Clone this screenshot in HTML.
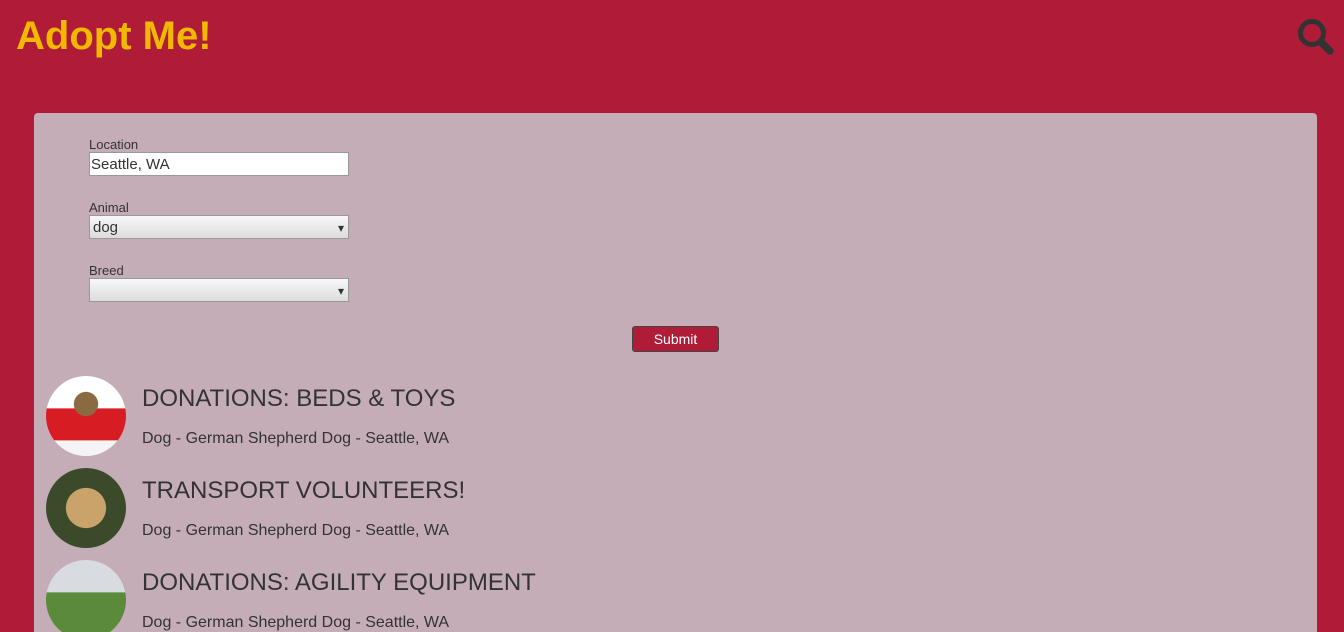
<!DOCTYPE html>
<html><head><meta charset="utf-8"><style>
*{box-sizing:border-box}
html,body{margin:0;width:1344px;height:632px;overflow:hidden}
body{background:#b01c37;font-family:"Liberation Sans",sans-serif;position:relative}
h1{position:absolute;left:16px;top:13px;margin:0;font-size:40px;font-weight:bold;color:#f0b800;line-height:46px}
.panel{position:absolute;left:34px;top:113px;width:1283px;height:519px;background:#c4adb7;border-radius:4px 4px 0 0}
label{position:absolute;left:55px;font-size:13px;color:#333}
.inp{position:absolute;left:55px;width:260px;height:24px;border:1px solid #999;font-size:15px;color:#333;padding:4px 1px 0;line-height:16px}
.txt{background:#fff}
.sel{background:linear-gradient(#f8f8f8,#dcdcdc);padding-left:3px}
.sel:after{content:"▾";position:absolute;right:4px;top:4px;font-size:12px}
.btn{position:absolute;left:598px;top:213px;width:87px;height:26px;background:#b01c37;border:1px solid #444;border-radius:3px;color:#fff;font-size:14px;text-align:center;line-height:24px}
.pet{position:absolute;left:12px}
.pet .img{position:absolute;left:0;top:0;width:80px;height:80px;border-radius:50%}
.pet h2{position:absolute;left:96px;top:9px;margin:0;font-size:24px;font-weight:normal;color:#333;white-space:nowrap}
.pet p{position:absolute;left:96px;top:54px;margin:0;font-size:16px;color:#333;white-space:nowrap}
</style></head><body>
<h1>Adopt Me!</h1>
<svg style="position:absolute;left:1296px;top:18px" width="42" height="42" viewBox="0 0 42 42"><circle cx="16" cy="15" r="11.5" fill="none" stroke="#333" stroke-width="5"/><line x1="25" y1="24" x2="34" y2="33" stroke="#333" stroke-width="7.5" stroke-linecap="round"/></svg>
<div class="panel">
<label style="top:24px">Location</label><div class="inp txt" style="top:39px">Seattle, WA</div>
<label style="top:87px">Animal</label><div class="inp sel" style="top:102px">dog</div>
<label style="top:150px">Breed</label><div class="inp sel" style="top:165px"></div>
<div class="btn">Submit</div>
<div class="pet" style="top:263px"><div class="img" style="background:radial-gradient(circle at 50% 35%,#8a6a40 0 18%,transparent 19%),linear-gradient(#fff 0 40%,#d81c24 41% 80%,#f4f4f4 81%)"></div><h2>DONATIONS: BEDS &amp; TOYS</h2><p>Dog - German Shepherd Dog - Seattle, WA</p></div>
<div class="pet" style="top:355px"><div class="img" style="background:radial-gradient(circle at 50% 50%,#c9a36a 0 35%,#3a4a2a 36%)"></div><h2>TRANSPORT VOLUNTEERS!</h2><p>Dog - German Shepherd Dog - Seattle, WA</p></div>
<div class="pet" style="top:447px"><div class="img" style="background:linear-gradient(#d8dce0 0 40%,#5a8a3a 41%)"></div><h2>DONATIONS: AGILITY EQUIPMENT</h2><p>Dog - German Shepherd Dog - Seattle, WA</p></div>
</div>
</body></html>
